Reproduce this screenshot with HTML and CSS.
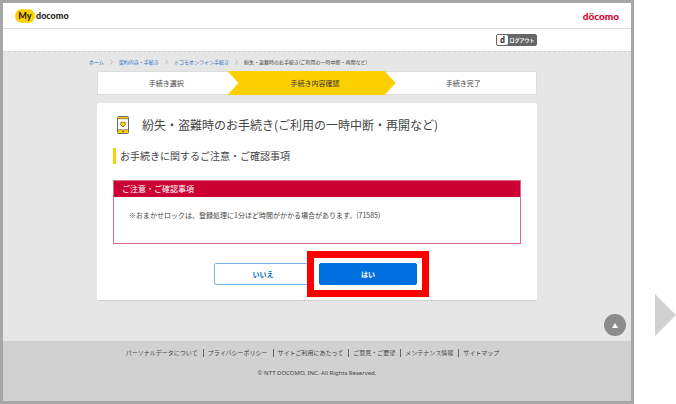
FILE: index.html
```html
<!DOCTYPE html>
<html lang="ja">
<head>
<meta charset="utf-8">
<title>My docomo</title>
<link rel="stylesheet" href="styles.css">
</head>
<body>
<div class="frame">
  <header class="header">
    <a class="my-logo" href="#">
      <svg class="my-shape" viewBox="0 0 20 14" aria-hidden="true"><circle cx="7" cy="7" r="7"/><circle cx="13" cy="7" r="7"/></svg>
      <span class="my-text">My</span>
      <span class="my-name">docomo</span>
    </a>
    <a class="brand" href="#">döcomo</a>
  </header>
  <div class="account">
    <button class="logout" type="button"><span class="logout-d">d</span><span class="logout-text">ログアウト</span></button>
  </div>
  <main class="main">
    <nav class="breadcrumb">
      <a href="#">ホーム</a>
      <svg class="crumb-arrow" viewBox="0 0 3 6"><path d="M0.5 0.5L2.5 3L0.5 5.5"/></svg>
      <a href="#">契約内容・手続き</a>
      <svg class="crumb-arrow" viewBox="0 0 3 6"><path d="M0.5 0.5L2.5 3L0.5 5.5"/></svg>
      <a href="#">ドコモオンライン手続き</a>
      <svg class="crumb-arrow" viewBox="0 0 3 6"><path d="M0.5 0.5L2.5 3L0.5 5.5"/></svg>
      <span>紛失・盗難時のお手続き(ご利用の一時中断・再開など)</span>
    </nav>
    <ol class="steps">
      <li>手続き選択</li>
      <li class="current"><span>手続き内容確認</span></li>
      <li class="last">手続き完了</li>
    </ol>
    <section class="card">
      <div class="title-row">
        <svg class="phone" viewBox="0 0 12 18" aria-hidden="true">
          <rect x="0.5" y="0.5" width="11" height="17" rx="1" fill="#fff"/>
          <path d="M1 1h10v2H1zM1 14h10v3H1z" fill="#ffd000"/>
          <rect x="0.5" y="0.5" width="11" height="17" rx="1" fill="none" stroke="#666"/>
          <path d="M1 2.7h10M1 13.7h10" stroke="#665c33" stroke-width=".7"/>
          <path d="M6 11L3.5 8.5C2.500 7 4.500 5 6 6.800C7.500 5 9.500 7 8.500 8.500Z" fill="#ffd000" stroke="#555" stroke-width=".7"/>
          <circle cx="6" cy="15.500" r=".8" fill="#554b22"/>
        </svg>
        <h1>紛失・盗難時のお手続き(ご利用の一時中断・再開など)</h1>
      </div>
      <h2>お手続きに関するご注意・ご確認事項</h2>
      <div class="notice">
        <h3>ご注意・ご確認事項</h3>
        <p>※おまかせロックは、登録処理に1分ほど時間がかかる場合があります。(71585)</p>
      </div>
      <div class="actions">
        <button class="button" type="button">いいえ</button>
        <div class="choice"><button class="button primary" type="button">はい</button></div>
      </div>
    </section>
    <a class="to-top" href="#" aria-label="ページの先頭へ"><svg viewBox="0 0 6 5"><path d="M3 0L6 5H0Z"/></svg></a>
  </main>
  <footer class="footer">
    <nav class="footer-links">
      <a href="#">パーソナルデータについて</a>
      <a href="#">プライバシーポリシー</a>
      <a href="#">サイトご利用にあたって</a>
      <a href="#">ご意見・ご要望</a>
      <a href="#">メンテナンス情報</a>
      <a href="#">サイトマップ</a>
    </nav>
    <p class="copyright">© NTT DOCOMO, INC. All Rights Reserved.</p>
  </footer>
</div>
<div class="next"><svg viewBox="0 0 21 42" aria-hidden="true"><path d="M0 0L21 21L0 42Z"/></svg></div>
</body>
</html>
```
FILE: styles.css
```css
* { box-sizing: border-box; }

body {
  display: flex;
  min-height: 100vh;
  margin: 0;
  background: #fff;
  color: #444;
  font-family: "Noto Sans CJK JP", sans-serif;
  font-size: 7px;
  line-height: 12px;
}

h1, h2, h3, p, ol { margin: 0; padding: 0; font-weight: 400; }
a { color: inherit; text-decoration: none; }
svg { display: block; }
button { margin: 0; padding: 0; font-family: inherit; }

.frame {
  display: flex;
  flex: 1;
  flex-direction: column;
  border: 3px solid #a6a6a6;
}

.header {
  display: flex;
  align-items: center;
  justify-content: space-between;
  height: 26px;
  padding: 0 12px;
  border-bottom: 1px solid #ddd;
  background: #fff;
  font-family: Lato, sans-serif;
  font-weight: 900;
}

.my-logo {
  display: grid;
  grid-template-columns: 20px auto;
  align-items: center;
  column-gap: 1px;
  color: #2b2416;
  font-size: 9px;
}
.my-shape { grid-area: 1 / 1; width: 20px; height: 14px; fill: #ffd000; }
.my-text { grid-area: 1 / 1; text-align: center; }
.brand { color: #d4002f; font-size: 10px; }

.account {
  display: flex;
  justify-content: center;
  height: 22px;
  padding: 5px 0;
  background: #fff;
}
.account::before { content: ""; width: 399px; }
.logout {
  display: flex;
  width: 41px;
  height: 12px;
  overflow: hidden;
  border: 1px solid #666;
  border-radius: 2px;
  background: #666;
  color: #fff;
  font-size: 5px;
  font-weight: 700;
  line-height: 10px;
}
.logout-d {
  width: 11px;
  border-radius: 0 2px 2px 0;
  background: #fff;
  color: #333;
  font-family: "Open Sans", sans-serif;
  font-size: 8px;
}
.logout-text { flex: 1; }

.main {
  position: relative;
  flex: 1;
  padding: 0 94px 38px;
  border-top: 1px dashed #d4d4d4;
  background: #e6e6e6;
}

.breadcrumb {
  display: flex;
  align-items: center;
  gap: 6px;
  height: 19px;
  margin-left: -8px;
  font-size: 5px;
  white-space: nowrap;
}
.breadcrumb a { color: #2874cc; }
.crumb-arrow { width: 3px; height: 6px; fill: none; stroke: #bbb; stroke-width: 1px; }

.steps {
  display: grid;
  grid-template-columns: 137fr 162fr 141fr;
  border: 1px solid #ddd;
  background: #fff;
  line-height: 22px;
  list-style: none;
  text-align: center;
}
.last { padding-right: 5px; }
.current { position: relative; color: #333; }
.current::before {
  position: absolute;
  inset: -1px 0 -1px -7px;
  background: #ffd000;
  clip-path: polygon(0 0, calc(100% - 11px) 0, 100% 50%, calc(100% - 11px) 100%, 0 100%, 11px 50%);
  content: "";
}
.current span { position: relative; }

.card {
  margin-top: 8px;
  padding: 12px 16px 15px;
  border-bottom: 1px solid #d0d0d0;
  border-radius: 2px;
  background: #fff;
}
.title-row {
  display: flex;
  align-items: center;
  gap: 13px;
  padding-left: 4px;
}
.phone { width: 12px; height: 18px; }
h1 { font-size: 12px; line-height: 20px; }
h2 {
  margin-top: 13px;
  padding-left: 4px;
  border-left: 3px solid #ffd000;
  font-size: 10px;
  line-height: 16px;
}

.notice {
  min-height: 64px;
  margin-top: 16px;
  border: 1px solid #e06a85;
}
.notice h3 {
  padding-left: 8px;
  background: #cc0033;
  color: #fff;
  font-size: 8px;
  line-height: 16px;
}
.notice p { padding: 12px 15px; }

.actions {
  display: flex;
  justify-content: center;
  gap: 7px;
  margin-top: 19px;
  padding-right: 3px;
}
.button {
  width: 98px;
  height: 22px;
  border: 1px solid #75b3e8;
  border-radius: 2px;
  background: #fff;
  color: #0068b8;
  font-size: 7px;
  font-weight: 700;
  line-height: 20px;
}
.primary {
  position: relative;
  border-color: #0070e0;
  background: #0070e0;
  color: #fff;
}
.choice { position: relative; }
.choice::before {
  position: absolute;
  inset: -12px;
  border: 7px solid #f00;
  background: #fff;
  content: "";
}

.to-top {
  position: absolute;
  right: 5px;
  bottom: 5px;
  display: grid;
  place-items: center;
  width: 22px;
  height: 22px;
  border-radius: 50%;
  background: #8c8c8c;
}
.to-top svg { width: 6px; height: 5px; fill: #fff; }

.footer {
  height: 60px;
  padding-top: 6px;
  background: #d1d1d1;
  font-size: 6px;
  text-align: center;
}
.footer-links {
  display: flex;
  justify-content: center;
  padding: 2px 8px 2px 0;
  line-height: 8px;
}
.footer-links a { padding: 0 5px 0 4px; }
.footer-links a + a { border-left: 1px solid #666; }
.copyright { margin-top: 8px; font-family: "Noto Sans", sans-serif; }

.next { width: 42px; padding: 294px 0 0 21px; }
.next svg { width: 21px; height: 42px; fill: #d1d1d1; }
```
